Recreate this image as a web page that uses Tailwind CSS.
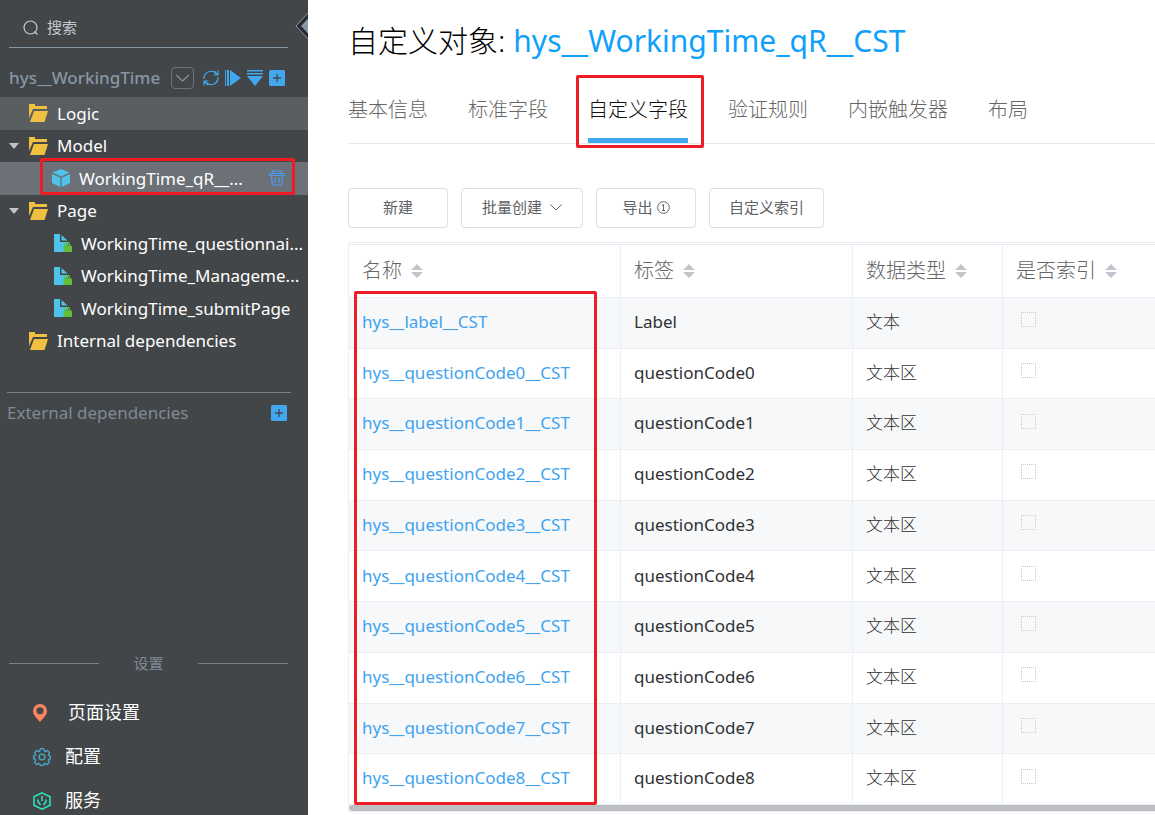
<!DOCTYPE html>
<html lang="zh-CN">
<head>
    <meta charset="UTF-8">
    <meta name="viewport" content="width=device-width, initial-scale=1.0">
    <title>自定义对象: hys__WorkingTime_qR__CST</title>
    <script src="https://cdn.jsdelivr.net/npm/@tailwindcss/browser@4"></script>
</head>
<body class="flex h-screen overflow-hidden bg-white font-['Noto_Sans','Noto_Sans_CJK_SC',sans-serif]">
    <!-- shared icons -->
    <svg class="hidden">
        <symbol id="folder" viewBox="0 0 19 18">
            <path fill="#f0c040" d="M0 0h6v2h12v3H4L0 14z"/>
            <path fill="#f0c040" d="M5 7h14l-3.500 11H1z"/>
        </symbol>
        <symbol id="page" viewBox="0 0 18 18">
            <path fill="#4fc3e8" d="M0 0h6v8h8v3.500h-4V18H0z"/>
            <path fill="#4fc3e8" d="M7.500 1l6 5.500h-6z"/>
            <path fill="none" stroke="#62c038" stroke-width="1.300" d="M11.500 12v-1.500a2 2 0 0 1 4 0V12"/>
            <rect x="9.500" y="11.500" width="8.500" height="6.500" rx="1" fill="#62c038"/>
        </symbol>
        <symbol id="plus" viewBox="0 0 16 16">
            <rect width="16" height="16" rx="1.500" fill="#41a8f0"/>
            <path stroke="#434648" stroke-width="1.300" d="M8 4v8M4 8h8"/>
        </symbol>
        <symbol id="sort" viewBox="0 0 12 14">
            <path fill="#c0c4cc" d="M6 0l6 6H0zM0 8h12l-6 6z"/>
        </symbol>
    </svg>

    <aside class="relative flex w-[308px] shrink-0 flex-col overflow-hidden bg-[#434648] text-[17px] text-white *:shrink-0">
        <button aria-label="收起" class="absolute top-3 right-0">
            <svg class="block" width="13" height="28" viewBox="0 0 13 28">
                <path d="M14 0L1 14l13 14z" fill="#272c30" stroke="#8a97a5"/>
                <path d="M14 5.500L6 14l8 8.500z" fill="#8a97a5"/>
            </svg>
        </button>

        <label class="mr-5 ml-[9px] flex h-12 items-center gap-2 border-b border-[#8796a5] pt-2 pl-[14px]">
            <svg width="16" height="16" viewBox="0 0 16 16" fill="none" stroke="#c8ccd0" stroke-width="1.200" class="shrink-0">
                <circle cx="7.500" cy="7.500" r="6.500"/><path d="M11.500 11.500l3 3"/>
            </svg>
            <input type="text" placeholder="搜索" class="w-full min-w-0 text-[15px] outline-none placeholder:text-[#c3c8cd]">
        </label>

        <div class="mt-3 mb-px flex h-9 items-center pl-[9px]">
            <span class="w-[154px] font-medium text-[#8796a5]">hys__WorkingTime</span>
            <button aria-label="切换" class="ml-2 flex h-[22px] w-[23px] items-center justify-center rounded border border-[#6c747b]">
                <svg width="13" height="8" viewBox="0 0 13 8" fill="none" stroke="#8796a5" stroke-width="1.200"><path d="M0 1l6.500 6L13 1"/></svg>
            </button>
            <div class="ml-[9px] flex items-center gap-[6px]">
                <button aria-label="刷新">
                    <svg class="block" width="16" height="16" viewBox="0 0 16 16" fill="none" stroke="#41a8f0" stroke-width="1.200">
                        <path d="M1 9A7 7 0 0 1 13 3.500M15 7A7 7 0 0 1 3 12.500M15 .500V5h-4.500M15 5l-4-4M1 15.500V11h4.500M1 11l4 4"/>
                    </svg>
                </button>
                <button aria-label="运行">
                    <svg class="block" width="16" height="16" viewBox="0 0 16 16" fill="#41a8f0"><path d="M0 0h1v16H0zM2 0h2v16H2zM5 0l11 8L5 16z"/></svg>
                </button>
                <button aria-label="筛选">
                    <svg class="block" width="16" height="16" viewBox="0 0 16 16" fill="#41a8f0"><path d="M0 0h16v1.500H0zM0 3h16v1.500H0zM0 6h16L8 16z"/></svg>
                </button>
                <button aria-label="新增"><svg class="block" width="16" height="16"><use href="#plus"/></svg></button>
            </div>
        </div>

        <ul class="flex h-[260px] flex-col *:flex *:min-h-0 *:flex-1 *:items-center">
            <li class="bg-[#5a5e61] pl-[29px]">
                <svg width="19" height="18" class="shrink-0"><use href="#folder"/></svg>
                <a href="#" class="ml-[9px]">Logic</a>
            </li>
            <li class="pl-[9px]">
                <svg width="10" height="6" class="mr-[10px] shrink-0" fill="#c0c4cc"><path d="M0 0h10L5 6z"/></svg>
                <svg width="19" height="18" class="shrink-0"><use href="#folder"/></svg>
                <a href="#" class="ml-[9px]">Model</a>
            </li>
            <li class="relative bg-[#6b7177] pl-[52px]">
                <svg width="18" height="18" viewBox="0 0 18 18" fill="#4fc3e8" class="shrink-0">
                    <path d="M9 0l8.500 3.500L9 7.500.500 3.500zM0 5l8.300 3.800V18L0 14zM18 5L9.700 8.800V18L18 14z"/>
                </svg>
                <a href="#" class="ml-[9px] w-[180px]">WorkingTime_qR__...</a>
                <button aria-label="删除" class="ml-[10px]">
                    <svg class="block" width="16" height="16" viewBox="0 0 16 16" fill="none" stroke="#4a9cf0" stroke-width="1.200">
                        <path d="M3.500 3V1h9v2M.500 3.500h15v2H.500zM2.500 6l.800 9h9.400l.800-9M6 7.500V13M10 7.500V13"/>
                    </svg>
                </button>
                <span class="pointer-events-none absolute -top-1 right-[13px] bottom-0 left-10 rounded-[2px] border-3 border-[#ee1c25]"></span>
            </li>
            <li class="pl-[9px]">
                <svg width="10" height="6" class="mr-[10px] shrink-0" fill="#c0c4cc"><path d="M0 0h10L5 6z"/></svg>
                <svg width="19" height="18" class="shrink-0"><use href="#folder"/></svg>
                <a href="#" class="ml-[9px]">Page</a>
            </li>
            <li class="pl-[54px]">
                <svg width="18" height="18" class="shrink-0"><use href="#page"/></svg>
                <a href="#" class="ml-[9px] whitespace-nowrap">WorkingTime_questionnai...</a>
            </li>
            <li class="pl-[54px]">
                <svg width="18" height="18" class="shrink-0"><use href="#page"/></svg>
                <a href="#" class="ml-[9px] whitespace-nowrap">WorkingTime_Manageme...</a>
            </li>
            <li class="pl-[54px]">
                <svg width="18" height="18" class="shrink-0"><use href="#page"/></svg>
                <a href="#" class="ml-[9px] whitespace-nowrap">WorkingTime_submitPage</a>
            </li>
            <li class="pl-[29px]">
                <svg width="19" height="18" class="shrink-0"><use href="#folder"/></svg>
                <a href="#" class="ml-[9px]">Internal dependencies</a>
            </li>
        </ul>

        <div class="mt-[35px] mr-[17px] ml-[7px] flex h-10 items-center justify-between border-t border-[#7d7f82] pr-1 text-[#7f8b97]">
            <span>External dependencies</span>
            <button aria-label="新增"><svg class="block" width="16" height="16"><use href="#plus"/></svg></button>
        </div>

        <div class="mt-[220px] mr-5 ml-[9px] flex items-center justify-between text-[15px] text-[#7f8b97]">
            <span class="h-px w-[90px] bg-[#7d7f82]"></span>
            <span>设置</span>
            <span class="h-px w-[90px] bg-[#7d7f82]"></span>
        </div>
        <nav class="mt-4 flex flex-col text-[18px] *:flex *:h-11 *:items-center">
            <a href="#" class="pl-[33px]">
                <svg width="14" height="18" viewBox="0 0 14 18" fill="#fa8460" class="shrink-0">
                    <path fill-rule="evenodd" d="M7 0a7 7 0 0 1 7 7c0 4-4 7.500-7 11C4 14.500 0 11 0 7a7 7 0 0 1 7-7zm0 3.300a3.500 3.500 0 1 0 0 7 3.500 3.500 0 0 0 0-7z"/>
                </svg>
                <span class="ml-[21px]">页面设置</span>
            </a>
            <a href="#" class="pl-[33px]">
                <svg width="18" height="18" viewBox="0 0 18 18" fill="none" stroke="#48a9c9" stroke-width="1.300" stroke-linejoin="round" class="shrink-0">
                    <circle cx="9" cy="9" r="2.900"/>
                    <path d="M7.300.700h3.400l.500 2.200 1.200.700 2-1.200 2.200 2.300-1.200 2 .500 1 1.500.300v2.800l-1.700.500-.500 1.200 1.300 1.900-2.300 2.200-1.900-1.200-1.200.500-.400 1.600H7.300l-.500-1.600-1.200-.500-1.900 1.200-2.200-2.200 1.200-1.900-.500-1.200L.700 10.800V8l1.500-.400.500-1.200L1.500 4.600l2.200-2.200 1.900 1.200 1.200-.500z"/>
                </svg>
                <span class="ml-[14px]">配置</span>
            </a>
            <a href="#" class="pl-[33px]">
                <svg width="18" height="18" viewBox="0 0 18 18" fill="none" stroke="#2ee6c0" stroke-width="1.500" class="shrink-0">
                    <path d="M9 .800l8 4v8.400l-8 4-8-4V4.800zM9 4v5M5 7.500v2L7.500 13M13 7.500v2L10.500 13"/>
                </svg>
                <span class="ml-[14px]">服务</span>
            </a>
        </nav>
    </aside>

    <main class="min-w-0 flex-1 overflow-hidden pl-10">
        <h1 class="mt-[18px] flex h-11 items-center gap-2 text-[30px] whitespace-nowrap text-black">
            <span class="font-light">自定义对象:</span>
            <a href="#" class="text-[#0ea0fb]">hys__WorkingTime_qR__CST</a>
        </h1>

        <nav class="mt-[13px] flex h-[69px] gap-10 border-b border-[#e4e7ed] text-[20px] font-light whitespace-nowrap text-[#666]">
            <a href="#" class="pt-5">基本信息</a>
            <a href="#" class="pt-5">标准字段</a>
            <a href="#" class="relative border-b-5 border-[#41a8f0] pt-5 text-[#111]">自定义字段
                <span class="pointer-events-none absolute top-0 -right-4 -bottom-[10px] -left-3 rounded-[2px] border-3 border-[#ee1c25]"></span>
            </a>
            <a href="#" class="pt-5">验证规则</a>
            <a href="#" class="pt-5">内嵌触发器</a>
            <a href="#" class="pt-5">布局</a>
        </nav>

        <div class="mt-11 flex gap-[13px] text-[15px] whitespace-nowrap text-[#606266] *:flex *:h-10 *:items-center *:justify-center *:rounded *:border *:border-[#dcdfe6] *:pb-[2px]">
            <button class="w-[100px]">新建</button>
            <button class="w-[122px] gap-2">批量创建
                <svg width="12" height="7" viewBox="0 0 12 7" fill="none" stroke="#606266"><path d="M.500.500L6 6l5.500-5.500"/></svg>
            </button>
            <button class="w-[100px] gap-1">导出
                <svg width="13" height="13" viewBox="0 0 13 13" fill="none" stroke="#606266"><circle cx="6.500" cy="6.500" r="5.800"/><path d="M5 4.500l1.500-1V9.500M5 9.500h3"/></svg>
            </button>
            <button class="w-[115px]">自定义索引</button>
        </div>

        <div class="relative mt-[14px] border-y border-l border-[#ebeef5] pt-px">
            <table class="h-[561px] w-full table-fixed border-separate border-spacing-0 border-t border-[#ebeef5] text-left text-[17px]">
                <colgroup>
                    <col class="w-[272px]"><col class="w-[232px]"><col class="w-[150px]"><col>
                </colgroup>
                <thead class="text-[20px] text-[#666]">
                    <tr class="h-[53px] *:border-r *:border-b *:border-[#ebeef5] *:px-[13px] *:font-light *:last:border-r-0">
                        <th><button class="flex items-center gap-[9px]">名称 <svg width="12" height="14"><use href="#sort"/></svg></button></th>
                        <th><button class="flex items-center gap-[9px]">标签 <svg width="12" height="14"><use href="#sort"/></svg></button></th>
                        <th><button class="flex items-center gap-[9px]">数据类型 <svg width="12" height="14"><use href="#sort"/></svg></button></th>
                        <th><button class="flex items-center gap-[9px]">是否索引 <svg width="12" height="14"><use href="#sort"/></svg></button></th>
                    </tr>
                </thead>
                <tbody id="fields" class="text-[#303133]"></tbody>
            </table>
            <div class="h-[6px] rounded-l-full bg-[#bcc0c2]"></div>
            <span class="pointer-events-none absolute top-12 bottom-[6px] left-[5px] w-[243px] rounded-[2px] border-3 border-[#ee1c25]"></span>
        </div>
    </main>

    <script>
        const fields = [{ name: 'hys__label__CST', label: 'Label', type: '文本' }];
        for (let i = 0; i <= 8; i++) {
            fields.push({ name: `hys__questionCode${i}__CST`, label: `questionCode${i}`, type: '文本区' });
        }

        document.getElementById('fields').innerHTML = fields.map(f => `
            <tr class="odd:bg-[#f6f8fa] *:border-r *:border-b *:border-[#ebeef5] *:px-[13px] *:pb-[2px] *:last:border-r-0">
                <td><a href="#" class="text-[#41a3ee]">${f.name}</a></td>
                <td>${f.label}</td>
                <td class="font-light">${f.type}</td>
                <td><input type="checkbox" disabled aria-label="${f.name} 是否索引" class="mb-1 ml-[5px] block size-[15px] appearance-none border border-dotted border-[#c8c8c8]"></td>
            </tr>`).join('');
    </script>
</body>
</html>
